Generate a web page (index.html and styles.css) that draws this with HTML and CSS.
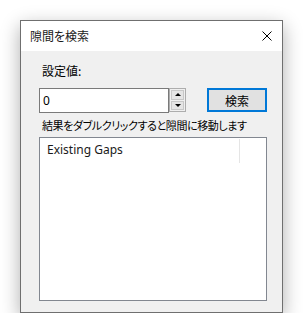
FILE: index.html
```html
<!DOCTYPE html>
<html lang="ja">
<head>
  <meta charset="UTF-8">
  <title>隙間を検索</title>
  <link rel="stylesheet" href="styles.css">
</head>
<body>
  <div class="dialog">
    <div class="title-bar">
      <span class="title">隙間を検索</span>
      <svg class="close" width="10" height="10" viewBox="0 0 10 10">
        <path d="M0.5 0.5 L9.5 9.5 M9.5 0.5 L0.5 9.5" stroke="#000" stroke-width="1" fill="none"/>
      </svg>
    </div>
    <div class="content">
      <div class="label">設定値:</div>
      <div class="input-row">
        <div class="spin-box">
          <div class="text-input">0</div>
          <div class="spin">
            <div class="spin-btn"><span class="arrow up"></span></div>
            <div class="spin-btn"><span class="arrow down"></span></div>
          </div>
        </div>
        <button class="search-btn">検索</button>
      </div>
      <div class="hint">結果をダブルクリックすると隙間に移動します</div>
      <div class="list">
        <div class="list-header">
          <div class="column">Existing Gaps</div>
        </div>
      </div>
    </div>
  </div>
</body>
</html>
```

FILE: styles.css
```css
body {
  margin: 0;
  padding: 20px 0 0 20px;
  background: #fff;
  font-family: "Noto Sans", "Noto Sans CJK JP", sans-serif;
  font-size: 12px;
  color: #000;
}
.dialog {
  width: 263px;
  height: 293px;
  box-sizing: border-box;
  border: 1px solid #6f6f6f;
  background: #f0f0f0;
  box-shadow: 0 6px 18px rgba(0, 0, 0, 0.32);
  display: flex;
  flex-direction: column;
}
/* Title bar */
.title-bar {
  height: 30px;
  background: #fff;
  display: flex;
  align-items: center;
  justify-content: space-between;
  padding: 0 10px 0 9px;
}
.title {
  font-family: "Noto Sans CJK JP", sans-serif;
  font-feature-settings: "palt";
  font-size: 12px;
  color: #1a1a1a;
  line-height: 16px;
}
.close {
  display: block;
}
/* Body */
.content {
  flex: 1;
  padding: 12px 15px 11px 18px;
  display: flex;
  flex-direction: column;
}
.label,
.hint {
  font-family: "Noto Sans CJK JP", sans-serif;
  font-feature-settings: "palt";
  line-height: 16px;
  padding-left: 3px;
  white-space: nowrap;
}
.label {
  margin-bottom: 9px;
}
.input-row {
  display: flex;
  justify-content: space-between;
  align-items: flex-start;
  height: 25px;
  margin-bottom: 4px;
}
.spin-box {
  display: flex;
}
.text-input {
  width: 130px;
  height: 25px;
  box-sizing: border-box;
  border: 1px solid #7a7a7a;
  background: #fff;
  padding-left: 3px;
  line-height: 23px;
}
.spin {
  width: 17px;
  height: 24px;
  box-sizing: border-box;
  border: 1px solid #adadad;
  background: #f0f0f0;
  display: flex;
  flex-direction: column;
  gap: 1px;
  padding: 1px;
}
.spin-btn {
  flex: 1;
  background: #e5e5e5;
  border: 1px solid #c8c8c8;
  display: flex;
  align-items: center;
  justify-content: center;
}
.arrow {
  width: 0;
  height: 0;
  border-left: 3px solid transparent;
  border-right: 3px solid transparent;
}
.arrow.up { border-bottom: 3px solid #000; }
.arrow.down { border-top: 3px solid #000; }
.search-btn {
  width: 60px;
  height: 24px;
  margin: 0;
  padding: 0;
  box-sizing: border-box;
  border: 2px solid #0078d7;
  background: #e1e1e1;
  font-family: "Noto Sans CJK JP", sans-serif;
  font-size: 12px;
  color: #000;
}
.hint {
  font-size: 11px;
  letter-spacing: -0.4px;
  margin-bottom: 4px;
}
/* Result list */
.list {
  flex: 1;
  border: 1px solid #828790;
  background: #fff;
}
.list-header {
  display: flex;
  padding-top: 1px;
}
.column {
  width: 200px;
  height: 24px;
  box-sizing: border-box;
  padding-left: 7px;
  line-height: 22px;
  font-size: 12px;
  color: #1a1a1a;
  border-right: 1px solid #e5e5e5;
}
```
